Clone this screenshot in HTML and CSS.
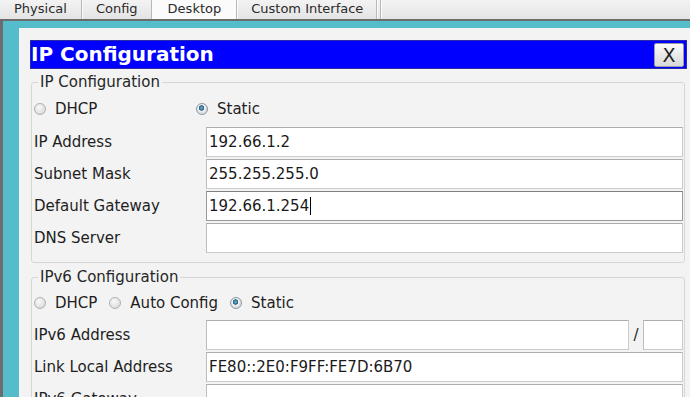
FILE: index.html
```html
<!DOCTYPE html>
<html>
<head>
<meta charset="utf-8">
<link rel="stylesheet" href="styles.css">
</head>
<body>
<div class="tabs">
  <div class="tab">Physical</div>
  <div class="tab">Config</div>
  <div class="tab active">Desktop</div>
  <div class="tab">Custom Interface</div>
  <div class="tab stub"></div>
</div>
<div class="frame">
  <div class="panel">
    <div class="titlebar">
      <span class="title">IP Configuration</span>
      <span class="close">X</span>
    </div>
    <fieldset class="group">
      <legend>IP Configuration</legend>
      <div class="radios">
        <span class="opt w1"><span class="radio"></span>DHCP</span>
        <span class="opt"><span class="radio on"></span>Static</span>
      </div>
      <div class="rows">
        <div class="label">IP Address</div><div class="field">192.66.1.2</div>
        <div class="label">Subnet Mask</div><div class="field">255.255.255.0</div>
        <div class="label">Default Gateway</div><div class="field focus">192.66.1.254<span class="caret"></span></div>
        <div class="label">DNS Server</div><div class="field"></div>
      </div>
    </fieldset>
    <fieldset class="group g2">
      <legend>IPv6 Configuration</legend>
      <div class="radios r6">
        <span class="opt"><span class="radio"></span>DHCP</span>
        <span class="opt"><span class="radio"></span>Auto Config</span>
        <span class="opt"><span class="radio on"></span>Static</span>
      </div>
      <div class="rows">
        <div class="label">IPv6 Address</div>
        <div class="split"><div class="field grow"></div><span class="slash">/</span><div class="field prefix"></div></div>
        <div class="label">Link Local Address</div><div class="field">FE80::2E0:F9FF:FE7D:6B70</div>
        <div class="label">IPv6 Gateway</div><div class="field"></div>
      </div>
    </fieldset>
  </div>
</div>
</body>
</html>
```
FILE: styles.css
```css
html, body {
  margin: 0;
  width: 690px;
  height: 397px;
  overflow: hidden;
}
body {
  background: #f0f0f0;
  font-family: "DejaVu Sans", Verdana, sans-serif;
  color: #1e1e1e;
}
.tabs {
  display: flex;
  height: 19px;
  background: linear-gradient(#f3f3f3, #e4e4e4);
}
.tab {
  padding: 0 13px;
  line-height: 18px;
  font-size: 13px;
  color: #2a2a2a;
  border-right: 1px solid #b8b8b8;
  box-shadow: 1px 0 0 #fbfbfb;
  margin-right: 1px;
}
.tab:first-child {
  padding: 0 14px;
}
.tab.active {
  background: #fbfbfb;
  padding: 0 15px;
}
.tab.stub {
  padding: 0;
  width: 2px;
}
.frame {
  border-top: 2px solid #6c6c6c;
  border-left: 3px solid #6c6c6c;
  background: #55bccb;
  padding: 7px 0 0 16px;
}
.panel {
  background: #f3f3f3;
  padding: 12px 3px 0 11px;
  height: 360px;
}
.titlebar {
  height: 27px;
  background: #0000ff;
  border: 1px solid #2a2aa8;
  display: flex;
  align-items: center;
  justify-content: space-between;
  padding-right: 2px;
}
.title {
  color: #fff;
  font-weight: bold;
  font-size: 20px;
  line-height: 27px;
}
.close {
  width: 28px;
  height: 22px;
  border: 1px solid #9a9aa8;
  border-radius: 2px;
  background: linear-gradient(#fbfbfb, #d8d8d8);
  color: #222;
  font-size: 19px;
  line-height: 22px;
  text-align: center;
}
.group {
  margin: 4px 2px 0 1px;
  padding: 0 1px 9px 2px;
  border: 1px solid #d6d6d6;
  border-radius: 3px;
  min-width: 0;
}
.g2 {
  margin-top: 5px;
}
legend {
  font-size: 15px;
  line-height: 18px;
  padding: 0 2px;
  margin-left: 4px;
  color: #262626;
}
.radios {
  display: flex;
  align-items: center;
  height: 36px;
  font-size: 15px;
}
.r6 {
  height: 34px;
  gap: 12px;
}
.opt {
  display: flex;
  align-items: center;
  gap: 9px;
}
.w1 {
  width: 162px;
}
.radio {
  width: 10px;
  height: 10px;
  border-radius: 50%;
  border: 1px solid #b0b0b0;
  background: radial-gradient(circle at 40% 35%, #fafafa, #d2d2d2);
}
.radio.on {
  border-color: #8a98a4;
  background: radial-gradient(circle at 45% 40%, #7fb6d6 0, #1f5f88 2.4px, #f4f4f4 3px, #dedede 5px);
}
.rows {
  display: grid;
  grid-template-columns: 172px 1fr;
  grid-auto-rows: 30px;
  row-gap: 2px;
  align-items: center;
  font-size: 15px;
}
.label {
  color: #1e1e1e;
}
.field {
  height: 28px;
  background: #fff;
  border: 1px solid #cbcbcb;
  border-top-color: #adadad;
  border-left-color: #bdbdbd;
  display: flex;
  align-items: center;
  padding-left: 2px;
  color: #1a1a1a;
}
.field.focus {
  border-color: #9a9a9a;
  border-top-color: #7f7f7f;
}
.caret {
  display: inline-block;
  width: 0;
  height: 18px;
  border-left: 1px solid #000;
  margin-left: 1px;
}
.split {
  display: flex;
  align-items: center;
  height: 30px;
}
.split .field {
  box-sizing: border-box;
  height: 30px;
}
.grow {
  flex: 1;
}
.slash {
  width: 14px;
  text-align: center;
}
.prefix {
  width: 40px;
}
```
